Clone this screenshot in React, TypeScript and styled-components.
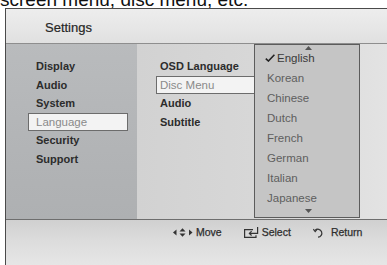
import React from 'react';
import styled, { createGlobalStyle } from 'styled-components';

const GlobalStyle = createGlobalStyle`
  html, body {
    margin: 0;
    padding: 0;
    background: #ffffff;
    overflow: hidden;
  }
  body {
    font-family: 'Liberation Sans', Arial, sans-serif;
  }
`;

const mainMenu = ['Display', 'Audio', 'System', 'Language', 'Security', 'Support'];
const subMenu = ['OSD Language', 'Disc Menu', 'Audio', 'Subtitle'];
const languages = ['English', 'Korean', 'Chinese', 'Dutch', 'French', 'German', 'Italian', 'Japanese'];

const Page = styled.div`
  width: 387px;
  height: 265px;
  display: flex;
  flex-direction: column;
  overflow: hidden;
`;

const Caption = styled.div`
  height: 8px;
  overflow: hidden;
  flex: none;
`;

const CaptionText = styled.div`
  margin-top: -10px;
  font-size: 19px;
  line-height: 19px;
  color: #111;
  white-space: nowrap;
`;

const Screen = styled.div`
  flex: 1;
  margin-left: 5px;
  border-top: 1px solid #4a4a4a;
  border-left: 1px solid #4a4a4a;
  display: flex;
  flex-direction: column;
`;

const Header = styled.div`
  height: 35px;
  flex: none;
  display: flex;
  align-items: center;
  padding: 2px 0 0 39px;
  box-sizing: border-box;
  border-bottom: 1px solid #8e8e8e;
  background: linear-gradient(180deg, #ededed 0%, #e6e6e6 60%, #e0e0e0 100%);
  font-size: 13px;
  color: #262626;
  -webkit-text-stroke: 0.2px #262626;
`;

const Body = styled.div`
  height: 175px;
  flex: none;
  display: grid;
  grid-template-columns: 131px 1fr;
`;

const LeftPanel = styled.div`
  padding-top: 13px;
  background: linear-gradient(180deg, #b9bbbd 0%, #b2b4b6 60%, #aeb0b2 100%);
`;

const RightPanel = styled.div`
  position: relative;
  padding-top: 13px;
  background: linear-gradient(90deg, #d2d2d2 0%, #d8d8d8 55%, #e3e3e3 100%);
`;

const MenuRow = styled.div<{ $active?: boolean; $indent: number; $width: number; $pad: number }>`
  box-sizing: border-box;
  height: 18.5px;
  margin-left: ${(p) => p.$indent}px;
  width: ${(p) => p.$width}px;
  padding-left: ${(p) => p.$pad}px;
  display: flex;
  align-items: center;
  border: 1px solid ${(p) => (p.$active ? '#6c6c6c' : 'transparent')};
  background: ${(p) => (p.$active ? '#f3f3f3' : 'transparent')};
  font-size: ${(p) => (p.$active ? '11.5px' : '11px')};
  font-weight: ${(p) => (p.$active ? 400 : 700)};
  color: ${(p) => (p.$active ? '#8a8a8a' : '#2c2c2c')};
  white-space: nowrap;
`;

const Dropdown = styled.div`
  position: absolute;
  left: 117px;
  top: 0;
  width: 104px;
  height: 169px;
  padding-top: 3px;
  border: 1px solid #5c5c5c;
  background: #c5c5c5;
`;

const ScrollArrow = styled.svg<{ $down?: boolean }>`
  position: absolute;
  left: 50px;
  ${(p) => (p.$down ? 'bottom: 4px;' : 'top: 1px;')}
  width: 7px;
  height: 4px;
`;

const LangItem = styled.div<{ $checked?: boolean }>`
  height: 20px;
  display: flex;
  align-items: center;
  padding-left: 12px;
  font-size: 11.5px;
  color: ${(p) => (p.$checked ? '#3a3a3a' : '#5e5e5e')};
`;

const Check = styled.svg`
  width: 10px;
  height: 8px;
  margin-left: -2px;
  margin-right: 2px;
`;

const Footer = styled.div`
  flex: 1;
  border-top: 1px solid #6e6e6e;
  background: linear-gradient(180deg, #d0d0d0 0%, #dcdcdc 45%, #e6e6e6 100%);
  padding: 5px 0 0 167px;
  display: flex;
  align-items: flex-start;
  gap: 22px;
`;

const Hint = styled.div<{ $gap: number }>`
  height: 14px;
  display: flex;
  align-items: center;
  gap: ${(p) => p.$gap}px;
  font-size: 10.5px;
  color: #2e2e2e;
  -webkit-text-stroke: 0.25px #2e2e2e;
`;

const MoveIcon = () => (
  <svg width="20" height="9" viewBox="0 0 20 9">
    <path d="M0 4.5 L3.5 1.5 V7.5 Z" fill="#333" />
    <path d="M6.5 3.6 L9.5 0.3 L12.5 3.6 Z" fill="#333" />
    <path d="M6.5 5.4 L9.5 8.7 L12.5 5.4 Z" fill="#333" />
    <path d="M19.5 4.5 L16 1.5 V7.5 Z" fill="#333" />
  </svg>
);

const SelectIcon = () => (
  <svg width="15" height="11" viewBox="0 0 15 11" fill="none" stroke="#333" strokeWidth="1.2">
    <path d="M9 2.6 H0.6 V10.4 H12 V8.2" />
    <path d="M13.6 0 V6.4 H5.5" />
    <path d="M7.6 4.3 L5.4 6.4 L7.6 8.5" />
  </svg>
);

const ReturnIcon = () => (
  <svg width="10" height="12" viewBox="0 0 10 12" fill="none" stroke="#333" strokeWidth="1.2">
    <path d="M2.2 4.2 A4 4 0 1 1 5 11.2" />
    <path d="M0.3 3.2 L2.2 5.6 L4.2 3.2" />
  </svg>
);

export default function App() {
  return (
    <Page>
      <GlobalStyle />
      <Caption>
        <CaptionText>screen menu, disc menu, etc.</CaptionText>
      </Caption>
      <Screen>
        <Header>Settings</Header>
        <Body>
          <LeftPanel>
            {mainMenu.map((item) => (
              <MenuRow key={item} $active={item === 'Language'} $indent={22} $width={100} $pad={7}>
                {item}
              </MenuRow>
            ))}
          </LeftPanel>
          <RightPanel>
            {subMenu.map((item) => (
              <MenuRow key={item} $active={item === 'Disc Menu'} $indent={19} $width={110} $pad={3}>
                {item}
              </MenuRow>
            ))}
            <Dropdown>
              <ScrollArrow viewBox="0 0 7 4">
                <path d="M0 4 L3.5 0 L7 4 Z" fill="#555" />
              </ScrollArrow>
              {languages.map((lang) => (
                <LangItem key={lang} $checked={lang === 'English'}>
                  {lang === 'English' && (
                    <Check viewBox="0 0 10 8">
                      <path d="M0.8 4.6 L3.4 7 L9.4 0.8" fill="none" stroke="#222" strokeWidth="1.6" />
                    </Check>
                  )}
                  {lang}
                </LangItem>
              ))}
              <ScrollArrow $down viewBox="0 0 7 4">
                <path d="M0 0 L3.5 4 L7 0 Z" fill="#555" />
              </ScrollArrow>
            </Dropdown>
          </RightPanel>
        </Body>
        <Footer>
          <Hint $gap={3}>
            <MoveIcon />
            Move
          </Hint>
          <Hint $gap={3}>
            <SelectIcon />
            Select
          </Hint>
          <Hint $gap={8}>
            <ReturnIcon />
            Return
          </Hint>
        </Footer>
      </Screen>
    </Page>
  );
}
